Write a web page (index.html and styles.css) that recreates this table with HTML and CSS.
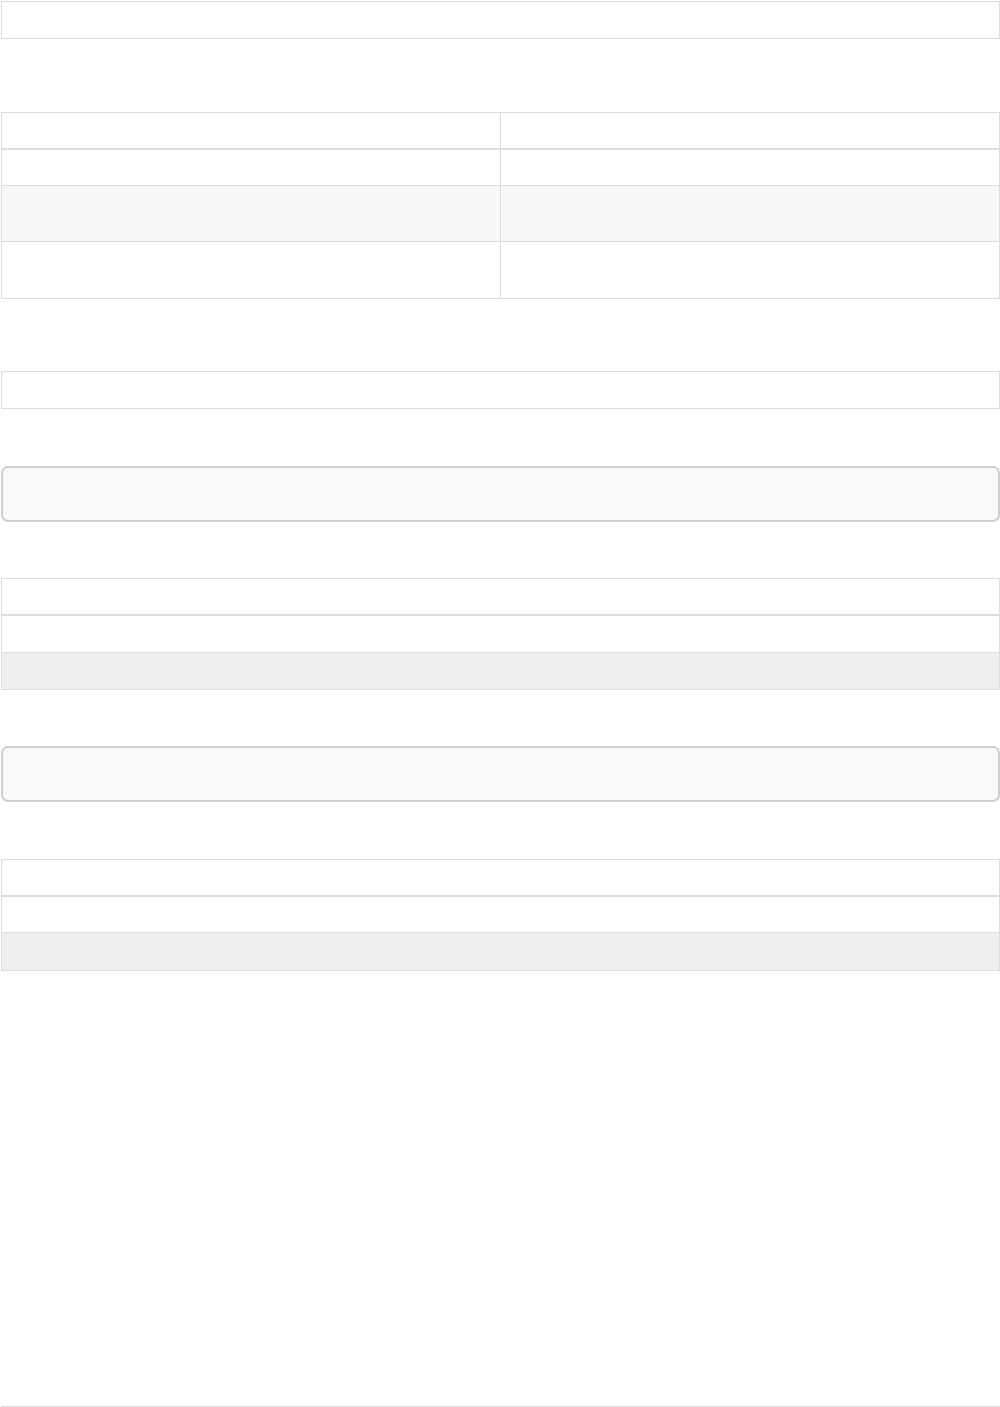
FILE: index.html
```html
<!DOCTYPE html>
<html lang="en">
<head>
<meta charset="utf-8">
<title>Page</title>
<link rel="stylesheet" href="styles.css">
</head>
<body>
<div class="page">
  <div class="tbl t1"><div class="row r36"></div></div>

  <div class="tbl t2">
    <div class="row head cols"><div class="cell"></div><div class="cell"></div></div>
    <div class="row cols r35"><div class="cell"></div><div class="cell"></div></div>
    <div class="row cols r55 zebra-light"><div class="cell"></div><div class="cell"></div></div>
    <div class="row cols r56"><div class="cell"></div><div class="cell"></div></div>
  </div>

  <div class="tbl t3"><div class="row r36"></div></div>

  <div class="panel p1"></div>

  <div class="tbl t4">
    <div class="row head"></div>
    <div class="row r36"></div>
    <div class="row r36 zebra"></div>
  </div>

  <div class="panel p2"></div>

  <div class="tbl t5">
    <div class="row head"></div>
    <div class="row r35"></div>
    <div class="row r37 zebra"></div>
  </div>

  <div class="rule"></div>
</div>
</body>
</html>
```

FILE: styles.css
```css
html, body {
  margin: 0;
  padding: 0;
  background: #ffffff;
  font-family: "Liberation Sans", Arial, sans-serif;
}

.page {
  display: flex;
  flex-direction: column;
  padding: 1px 0 0 1px;
  width: 999px;
}

.tbl {
  border: 1px solid #dddddd;
  display: flex;
  flex-direction: column;
}

.row {
  height: 36px;
}

.row + .row {
  border-top: 1px solid #dddddd;
}

.row.head {
  height: 35px;
  border-bottom: 2px solid #dddddd;
}

.row.head + .row {
  border-top: 0;
}

.r35 { height: 35px; }
.r36 { height: 36px; }
.r37 { height: 37px; }
.r55 { height: 55px; }
.r56 { height: 56px; }

.cols {
  display: grid;
  grid-template-columns: 498px 1px 498px;
}

.cols .cell:first-child {
  border-right: 1px solid #dddddd;
  grid-column: 1 / 3;
}

.cols .cell:last-child {
  grid-column: 3;
}

.zebra-light {
  background: #f8f8f8;
}

.zebra {
  background: #efefef;
}

.t2 { margin-top: 73px; }
.t3 { margin-top: 72px; }

.panel {
  height: 52px;
  border: 2px solid #cfcfcf;
  border-radius: 7px;
  background: #f9f9f9;
}

.p1 { margin-top: 57px; }
.t4 { margin-top: 56px; }
.p2 { margin-top: 56px; }
.t5 { margin-top: 57px; }

.rule {
  margin-top: 435px;
  border-top: 1px solid #dddddd;
  height: 0;
}
```
